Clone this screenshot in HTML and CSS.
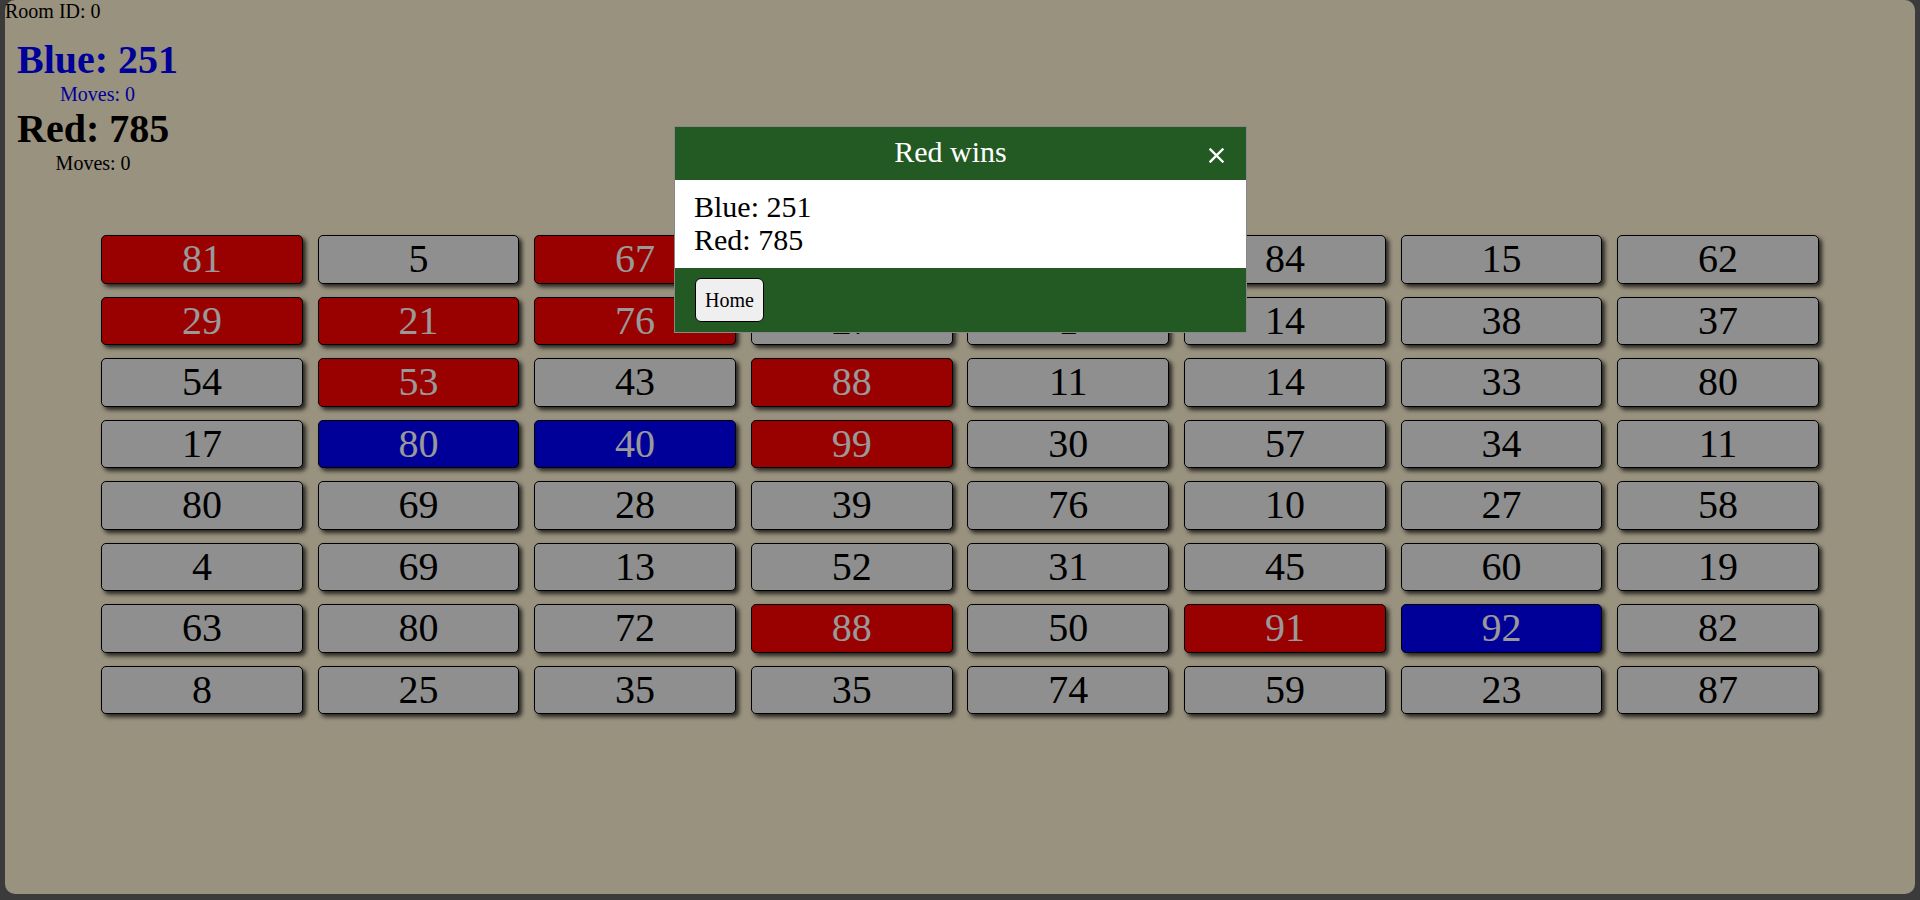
FILE: index.html
```html
<!DOCTYPE html>
<html lang="en">
<head>
<meta charset="utf-8">
<title>Room 0</title>
<link rel="stylesheet" href="styles.css">
</head>
<body>
<div class="page">
  <div class="room-id">Room ID: 0</div>
  <div class="scores">
    <div class="player player-blue">
      <h1 class="player-score">Blue: 251</h1>
      <p class="player-moves">Moves: 0</p>
    </div>
    <div class="player player-red">
      <h1 class="player-score">Red: 785</h1>
      <p class="player-moves">Moves: 0</p>
    </div>
  </div>
  <div class="board">
    <div class="tile tile-red">81</div>
    <div class="tile">5</div>
    <div class="tile tile-red">67</div>
    <div class="tile">44</div>
    <div class="tile">26</div>
    <div class="tile">84</div>
    <div class="tile">15</div>
    <div class="tile">62</div>

    <div class="tile tile-red">29</div>
    <div class="tile tile-red">21</div>
    <div class="tile tile-red">76</div>
    <div class="tile">27</div>
    <div class="tile">1</div>
    <div class="tile">14</div>
    <div class="tile">38</div>
    <div class="tile">37</div>

    <div class="tile">54</div>
    <div class="tile tile-red">53</div>
    <div class="tile">43</div>
    <div class="tile tile-red">88</div>
    <div class="tile">11</div>
    <div class="tile">14</div>
    <div class="tile">33</div>
    <div class="tile">80</div>

    <div class="tile">17</div>
    <div class="tile tile-blue">80</div>
    <div class="tile tile-blue">40</div>
    <div class="tile tile-red">99</div>
    <div class="tile">30</div>
    <div class="tile">57</div>
    <div class="tile">34</div>
    <div class="tile">11</div>

    <div class="tile">80</div>
    <div class="tile">69</div>
    <div class="tile">28</div>
    <div class="tile">39</div>
    <div class="tile">76</div>
    <div class="tile">10</div>
    <div class="tile">27</div>
    <div class="tile">58</div>

    <div class="tile">4</div>
    <div class="tile">69</div>
    <div class="tile">13</div>
    <div class="tile">52</div>
    <div class="tile">31</div>
    <div class="tile">45</div>
    <div class="tile">60</div>
    <div class="tile">19</div>

    <div class="tile">63</div>
    <div class="tile">80</div>
    <div class="tile">72</div>
    <div class="tile tile-red">88</div>
    <div class="tile">50</div>
    <div class="tile tile-red">91</div>
    <div class="tile tile-blue">92</div>
    <div class="tile">82</div>

    <div class="tile">8</div>
    <div class="tile">25</div>
    <div class="tile">35</div>
    <div class="tile">35</div>
    <div class="tile">74</div>
    <div class="tile">59</div>
    <div class="tile">23</div>
    <div class="tile">87</div>
  </div>
</div>

<div class="overlay"></div>

<div class="modal">
  <div class="modal-header">
    <h2 class="modal-title">Red wins</h2>
    <span class="modal-close"><svg width="15" height="15" viewBox="0 0 15 15"><path d="M1.5 1.5 L13.5 13.5 M13.5 1.5 L1.5 13.5" stroke="#ffffff" stroke-width="2.4" stroke-linecap="square" fill="none"/></svg></span>
  </div>
  <div class="modal-body">
    <p class="modal-line">Blue: 251</p>
    <p class="modal-line">Red: 785</p>
  </div>
  <div class="modal-footer">
    <button class="home-button">Home</button>
  </div>
</div>
</body>
</html>
```
FILE: styles.css
```css
html, body {
  margin: 0;
  padding: 0;
}

body {
  background: #636363;
  font-family: "Liberation Serif", "Times New Roman", serif;
  color: #000;
  height: 900px;
  overflow: hidden;
}

.page {
  margin: 0 5px;
  height: 894px;
  border-radius: 10px;
  background: #fff3d4;
}

.room-id {
  font-size: 20px;
  line-height: 23px;
}

.scores {
  display: flex;
  flex-direction: column;
  align-items: flex-start;
  margin: 14px 0 0 12px;
}

.player {
  text-align: center;
}

.player-score {
  margin: 0;
  font-size: 40px;
  line-height: 46px;
  font-weight: bold;
}

.player-moves {
  margin: 0;
  font-size: 20px;
  line-height: 23px;
}

.player-blue {
  color: #0000ff;
}

.player-red {
  color: #000;
}

.board {
  display: grid;
  grid-template-columns: repeat(8, 201.8px);
  grid-auto-rows: 48.5px;
  column-gap: 14.8px;
  row-gap: 13px;
  justify-content: center;
  margin-top: 60px;
}

.tile {
  box-sizing: border-box;
  border: 1px solid #000;
  border-radius: 5px;
  background: #efefef;
  color: #000;
  font-size: 40px;
  line-height: 46.5px;
  text-align: center;
  box-shadow: 3px 3px 4px rgba(0, 0, 0, 0.75);
}

.tile-red {
  background: #ff0000;
  color: #ffffff;
}

.tile-blue {
  background: #0000ff;
  color: #ffffff;
}

.overlay {
  position: fixed;
  inset: 0;
  background: rgba(0, 0, 0, 0.4);
}

.modal {
  position: fixed;
  top: 126px;
  left: calc(50% - 286px);
  width: 573px;
  box-sizing: border-box;
  border: 1px solid #888;
  background: #fff;
}

.modal-header {
  display: flex;
  align-items: center;
  background: #235923;
  color: #fff;
  padding: 8px 22px 11px 17px;
}

.modal-title {
  flex: 1;
  margin: 0;
  font-size: 30px;
  line-height: 34px;
  font-weight: normal;
  text-align: center;
}

.modal-close {
  display: block;
  margin-top: 6px;
}

.modal-close svg {
  display: block;
}

.modal-body {
  padding: 10px 18px 12px 19px;
}

.modal-line {
  margin: 0;
  font-size: 30px;
  line-height: 33px;
}

.modal-footer {
  background: #235923;
  padding: 10px 20px;
}

.home-button {
  display: block;
  font-family: "Liberation Serif", "Times New Roman", serif;
  font-size: 20px;
  line-height: 22px;
  padding: 10px 9px;
  border: 1px solid #000;
  border-radius: 6px;
  background: #efefef;
  color: #000;
}
```
